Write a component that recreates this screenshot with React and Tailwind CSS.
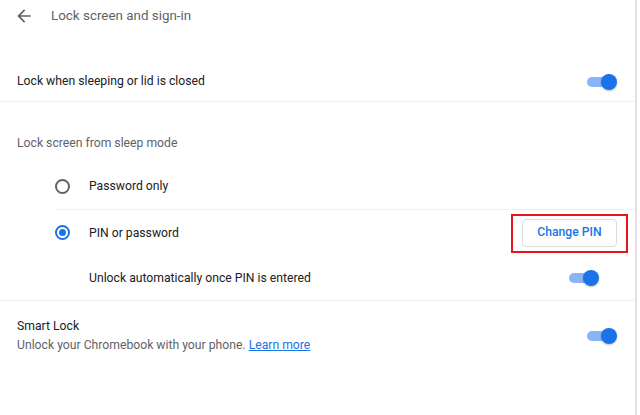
import React, { useState } from 'react';

const Toggle = ({ on, onClick }) => (
  <button onClick={onClick} className="relative w-[30px] h-[16px] flex items-center shrink-0">
    <span className={`block w-[26px] h-[10px] rounded-full ${on ? 'bg-[#8ab4f8]' : 'bg-[#bdc1c6]'}`} />
    <span
      className={`absolute top-0 w-[16px] h-[16px] rounded-full shadow-[0_1px_2px_rgba(0,0,0,0.25)] ${on ? 'right-0 bg-[#1a73e8]' : 'left-0 bg-white'}`}
    />
  </button>
);

const Radio = ({ checked, onClick }) => (
  <button
    onClick={onClick}
    className={`w-[15px] h-[15px] rounded-full border-2 flex items-center justify-center shrink-0 ${checked ? 'border-[#1a73e8]' : 'border-[#5f6368]'}`}
  >
    {checked && <span className="block w-[7px] h-[7px] rounded-full bg-[#1a73e8]" />}
  </button>
);

const App = () => {
  const [lockOnSleep, setLockOnSleep] = useState(true);
  const [mode, setMode] = useState('pin');
  const [autoUnlock, setAutoUnlock] = useState(true);
  const [smartLock, setSmartLock] = useState(true);

  return (
    <div className="w-[640px] h-[415px] bg-white overflow-hidden font-['Roboto',sans-serif] text-[12.2px]">
      <div className="w-[637px] h-full border-r-2 border-[#e3e3e3]">
        {/* header */}
        <div className="h-[32px] flex items-center">
          <button className="ml-[14px] w-[20px] h-[20px] text-[#5f6368]">
            <svg viewBox="0 0 24 24" width="20" height="20" fill="currentColor">
              <path d="M20 11H7.83l5.59-5.59L12 4l-8 8 8 8 1.41-1.41L7.83 13H20v-2z" />
            </svg>
          </button>
          <span className="ml-[17px] text-[#5f6368] text-[13.4px]">Lock screen and sign-in</span>
        </div>

        <div className="mt-[26px] h-[44px] flex items-center justify-between pl-[17px] pr-[18px] pt-[4px] border-b border-[#f1f1f1]">
          <span className="text-[#202124]">Lock when sleeping or lid is closed</span>
          <Toggle on={lockOnSleep} onClick={() => setLockOnSleep(!lockOnSleep)} />
        </div>

        <div className="h-[62px] flex items-center pl-[17px] pt-[20px]">
          <span className="text-[#5f6368]">Lock screen from sleep mode</span>
        </div>

        <div className="pl-[55px]">
          <div className="h-[46px] flex items-center border-b border-[#f1f1f1]">
            <Radio checked={mode === 'password'} onClick={() => setMode('password')} />
            <span className="ml-[19px] text-[#202124]">Password only</span>
          </div>
          <div className="h-[46px] flex items-center justify-between pr-[7px]">
            <div className="flex items-center">
              <Radio checked={mode === 'pin'} onClick={() => setMode('pin')} />
              <span className="ml-[19px] text-[#202124]">PIN or password</span>
            </div>
            <div className="border-2 border-[#e8141c] pt-[3px] pb-[4px] px-[9px]">
              <button className="w-[95px] h-[28px] rounded-[4px] border border-[#dadce0] text-[#1a73e8] font-medium">
                Change PIN
              </button>
            </div>
          </div>
        </div>

        <div className="h-[45px] flex items-center justify-between pl-[89px] pr-[36px] border-b border-[#f1f1f1]">
          <span className="text-[#202124]">Unlock automatically once PIN is entered</span>
          <Toggle on={autoUnlock} onClick={() => setAutoUnlock(!autoUnlock)} />
        </div>

        <div className="h-[70px] flex items-center justify-between pl-[17px] pr-[18px]">
          <div className="flex flex-col leading-[19px]">
            <span className="text-[#202124]">Smart Lock</span>
            <span className="text-[#5f6368]">
              Unlock your Chromebook with your phone.{' '}
              <a href="#" className="text-[#1a73e8] underline">Learn more</a>
            </span>
          </div>
          <Toggle on={smartLock} onClick={() => setSmartLock(!smartLock)} />
        </div>
      </div>
    </div>
  );
};

export default App;
